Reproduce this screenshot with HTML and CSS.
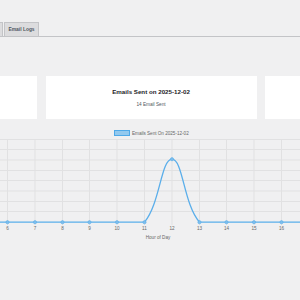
FILE: index.html
```html
<!DOCTYPE html>
<html>
<head>
<meta charset="utf-8">
<link rel="stylesheet" href="styles.css">
</head>
<body>
<div class="tabs">
  <span class="tab tab-prev"></span>
  <span class="tab">Email Logs</span>
</div>
<div class="cards">
  <div class="card"></div>
  <div class="card"><h3 class="card-title">Emails Sent on 2025-12-02</h3><p class="card-sub">14 Email Sent</p></div>
  <div class="card"></div>
</div>
<svg class="chart" width="300" height="120" viewBox="0 124 300 120">
  <rect x="114.5" y="130.5" width="15" height="5" fill="rgba(54,162,235,0.5)" stroke="#4fa9e8" stroke-width="1"/>
  <text class="legend" x="132" y="135.4">Emails Sent On 2025-12-02</text>
  <g stroke="#e1e1e2" stroke-width="1">
    <line x1="0" x2="300" y1="139.5" y2="139.5"/>
    <line x1="0" x2="300" y1="149.5" y2="149.5"/>
    <line x1="0" x2="300" y1="160" y2="160"/>
    <line x1="0" x2="300" y1="170.5" y2="170.5"/>
    <line x1="0" x2="300" y1="180.5" y2="180.5"/>
    <line x1="0" x2="300" y1="191" y2="191"/>
    <line x1="0" x2="300" y1="201.5" y2="201.5"/>
    <line x1="0" x2="300" y1="211.5" y2="211.5"/>
    <line x1="7.5" x2="7.5" y1="139" y2="225"/>
    <line x1="35" x2="35" y1="139" y2="225"/>
    <line x1="62.5" x2="62.5" y1="139" y2="225"/>
    <line x1="89.5" x2="89.5" y1="139" y2="225"/>
    <line x1="117" x2="117" y1="139" y2="225"/>
    <line x1="144.5" x2="144.5" y1="139" y2="225"/>
    <line x1="172" x2="172" y1="139" y2="225"/>
    <line x1="199.5" x2="199.5" y1="139" y2="225"/>
    <line x1="226.5" x2="226.5" y1="139" y2="225"/>
    <line x1="254" x2="254" y1="139" y2="225"/>
    <line x1="281.5" x2="281.5" y1="139" y2="225"/>
  </g>
  <path d="M-20,222.2 L144.5,222.2 C160,204 161,159.2 172,159.2 C183,159.2 183.5,204 199.5,222.2 L310,222.2" fill="none" stroke="#5aaeea" stroke-width="1.3"/>
  <g fill="#7dbdec" stroke="#5aaeea" stroke-width="0.6">
    <circle cx="7.5" cy="222.2" r="1.6"/>
    <circle cx="35" cy="222.2" r="1.6"/>
    <circle cx="62.5" cy="222.2" r="1.6"/>
    <circle cx="89.5" cy="222.2" r="1.6"/>
    <circle cx="117" cy="222.2" r="1.6"/>
    <circle cx="144.5" cy="222.2" r="1.6"/>
    <circle cx="172" cy="159.2" r="1.6"/>
    <circle cx="199.5" cy="222.2" r="1.6"/>
    <circle cx="226.5" cy="222.2" r="1.6"/>
    <circle cx="254" cy="222.2" r="1.6"/>
    <circle cx="281.5" cy="222.2" r="1.6"/>
  </g>
  <g class="ticks" text-anchor="middle">
    <text x="7.5" y="230">6</text>
    <text x="35" y="230">7</text>
    <text x="62.5" y="230">8</text>
    <text x="89.5" y="230">9</text>
    <text x="117" y="230">10</text>
    <text x="144.5" y="230">11</text>
    <text x="172" y="230">12</text>
    <text x="199.5" y="230">13</text>
    <text x="226.5" y="230">14</text>
    <text x="254" y="230">15</text>
    <text x="281.5" y="230">16</text>
  </g>
  <text class="axis-title" x="158" y="238.5" text-anchor="middle">Hour of Day</text>
</svg>
</body>
</html>
```
FILE: styles.css
```css
html, body {
  margin: 0;
  padding: 0;
  background: #f0f0f1;
  overflow: hidden;
  font-family: "Liberation Sans", Arial, sans-serif;
}
.tabs {
  display: flex;
  align-items: flex-end;
  gap: 1.5px;
  padding-top: 22px;
  margin-left: -40px;
  border-bottom: 1px solid #c3c4c7;
  height: 14px;
}
.tab {
  box-sizing: border-box;
  height: 14px;
  line-height: 13px;
  padding: 0 3.5px;
  border: 1px solid #c3c4c7;
  border-bottom: none;
  background: #dcdcde;
  color: #50575e;
  font-size: 4.9px;
  font-weight: 700;
  white-space: nowrap;
}
.tab-prev {
  width: 42.5px;
}
.cards {
  display: flex;
  gap: 8.5px;
  margin-top: 39px;
  margin-left: -174px;
}
.card {
  flex: 0 0 211px;
  height: 42.5px;
  box-sizing: border-box;
  background: #fff;
  padding-top: 12px;
  text-align: center;
}
.card-title {
  margin: 0;
  font-size: 6.2px;
  line-height: 8px;
  font-weight: 700;
  color: #1d2327;
}
.card-sub {
  margin: 6px 0 0;
  font-size: 4.7px;
  line-height: 6px;
  color: #50575e;
}
.chart {
  display: block;
  margin-top: 5.5px;
}
.legend, .ticks text, .axis-title {
  font-family: "Liberation Sans", Arial, sans-serif;
  font-size: 4.6px;
  fill: #666;
}
```
